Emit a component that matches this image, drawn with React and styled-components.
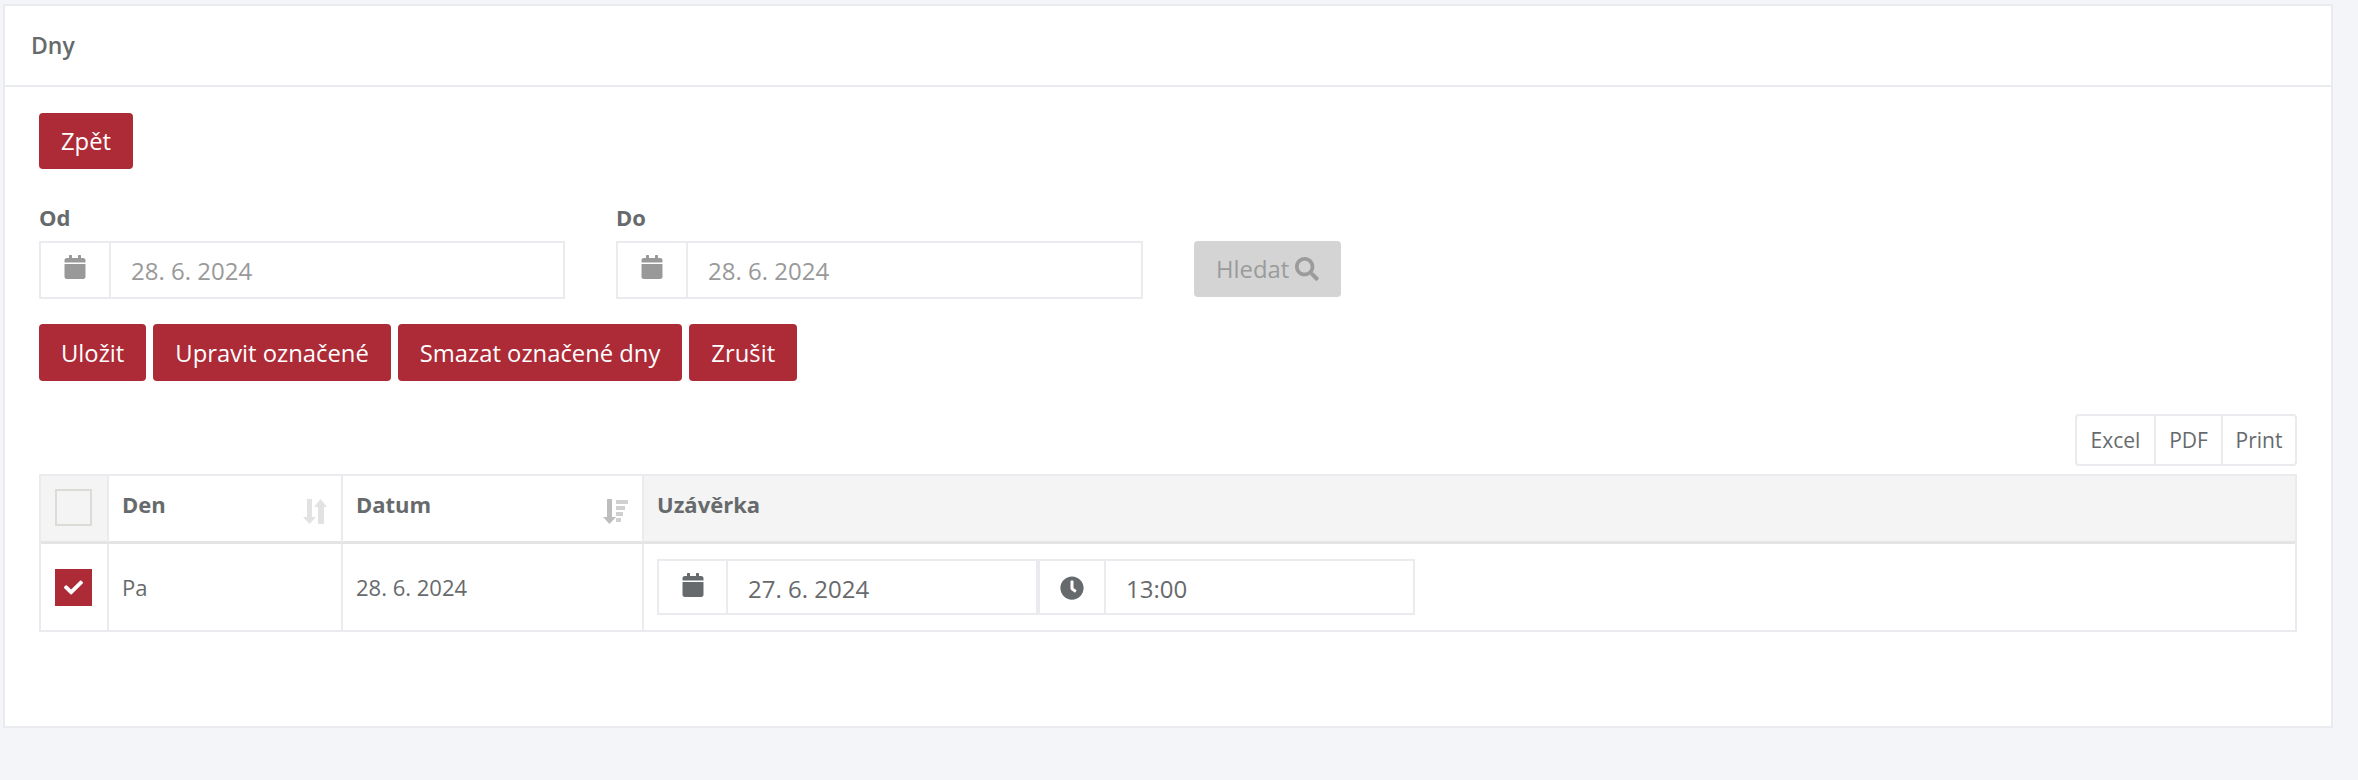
import React from 'react';
import styled, { createGlobalStyle } from 'styled-components';
import { FaCalendar, FaClock, FaSearch, FaCheck } from 'react-icons/fa';

const Global = createGlobalStyle`
  html, body { margin: 0; padding: 0; background: #f3f5f9; }
  body { font-family: "Open Sans", sans-serif; font-size: 22px; color: #676a6c; }
`;

const Page = styled.div`
  padding: 4px 25px 0 3px;
  height: 776px;
`;

const Card = styled.section`
  background: #fff;
  border: 2px solid #e9ebee;
  height: 724px;
  box-sizing: border-box;
`;

const CardHeader = styled.header`
  height: 81px;
  box-sizing: border-box;
  border-bottom: 2px solid #e9ebee;
  padding: 25px 0 0 26px;
  font-size: 23px;
  font-weight: 600;
  line-height: 28px;
`;

const CardBody = styled.div`
  padding: 26px 34px 0 34px;
  display: flex;
  flex-direction: column;
`;

const Button = styled.button`
  height: ${p => p.$h || 57}px;
  padding: 0 22px;
  margin-bottom: ${p => p.$mb || 0}px;
  border: 0;
  border-radius: 4px;
  background: ${p => (p.$disabled ? '#d4d4d4' : '#ad2a37')};
  color: ${p => (p.$disabled ? '#9b9b9b' : '#fff')};
  font: 400 23.800px "Open Sans", sans-serif;
  display: inline-flex;
  align-items: center;
  gap: 6px;
  white-space: nowrap;
`;

const BackRow = styled.div`
  display: flex;
  margin-bottom: 35px;
`;

const FilterRow = styled.div`
  display: flex;
  align-items: flex-end;
`;

const Field = styled.div`
  width: ${p => p.$w}px;
  margin-right: ${p => p.$mr}px;
`;

const Label = styled.label`
  display: block;
  font-weight: 700;
  font-size: 22px;
  line-height: 27px;
  margin-bottom: 10px;
`;

const InputGroup = styled.div`
  display: flex;
  height: ${p => p.$h || 58}px;
  box-sizing: border-box;
  border: 2px solid #e9ebee;
  width: ${p => (p.$w ? `${p.$w}px` : 'auto')};
  color: ${p => p.$color || '#999'};
`;

const Addon = styled.span`
  width: ${p => p.$w || 70}px;
  flex: none;
  box-sizing: border-box;
  border-right: 2px solid #e9ebee;
  display: flex;
  justify-content: center;
  padding-top: ${p => p.$top || 12}px;
  font-size: 24px;
`;

const Value = styled.span`
  padding-left: 20px;
  line-height: 55px;
  font-size: 24px;
`;

const Actions = styled.div`
  display: flex;
  gap: 7px;
  margin-top: 25px;
`;

const ExportRow = styled.div`
  display: flex;
  justify-content: flex-end;
  margin-top: 33px;
  margin-bottom: 8px;
`;

const ExportGroup = styled.div`
  display: flex;
  height: 52px;
  box-sizing: border-box;
  border: 2px solid #e9ebee;
  border-radius: 4px;
`;

const ExportItem = styled.span`
  width: ${p => p.$w}px;
  box-sizing: border-box;
  display: flex;
  align-items: center;
  justify-content: center;
  font-size: 21px;
  & + & { border-left: 2px solid #e9ebee; }
`;

const Table = styled.div`
  display: grid;
  grid-template-columns: 66px 234px 301px 1fr;
  grid-template-rows: 68px 86px;
  border: 2px solid #e9ebee;
  box-sizing: border-box;
  font-size: 22px;
`;

const HeadCell = styled.div`
  position: relative;
  box-sizing: border-box;
  background: ${p => (p.$shade ? '#f4f4f4' : '#fff')};
  border-bottom: 3px solid #e4e4e4;
  border-left: ${p => (p.$first ? 0 : '2px solid #e9ebee')};
  padding: 13px 0 0 ${p => (p.$first ? 14 : 13)}px;
  font-weight: 700;
  line-height: 30px;
`;

const Cell = styled.div`
  box-sizing: border-box;
  border-left: ${p => (p.$first ? 0 : '2px solid #e9ebee')};
  padding-left: ${p => (p.$first ? 14 : 13)}px;
  display: flex;
  align-items: center;
`;

const SortIcon = styled.span`
  position: absolute;
  right: 14px;
  top: 23px;
  display: flex;
`;

const Check = styled.span`
  width: 37px;
  height: 37px;
  box-sizing: border-box;
  display: flex;
  align-items: center;
  justify-content: center;
  background: ${p => (p.$on ? '#ad2a37' : '#f4f4f4')};
  border: ${p => (p.$on ? 0 : '2px solid #dcdcd6')};
  color: #fff;
  font-size: 19px;
`;

const InlineInputs = styled.div`
  display: flex;
`;

// unsorted column: arrow down + arrow up
const SortBoth = () => (
  <svg width="24" height="25" viewBox="0 0 24 25" fill="#e2e2e2">
    <path d="M4 0h5v18h4l-6.500 7L0 18h4z" />
    <path d="M17.500 0L24 8h-3v17h-6V8h-4z" />
  </svg>
);

// sorted column: arrow down + bars getting shorter
const SortDesc = () => (
  <svg width="25" height="25" viewBox="0 0 25 25">
    <path fill="#bdbdbd" d="M4 0h5v18h4l-6.500 7L0 18h4z" />
    <path fill="#d0d0d0" d="M13 1h12v4H13zM13 7h9v4h-9zM13 13h7v4h-7zM13 19h5v4h-5z" />
  </svg>
);

const App = () => (
  <>
    <Global />
    <Page>
      <Card>
        <CardHeader>Dny</CardHeader>
        <CardBody>
          <BackRow><Button $h={56}>Zpět</Button></BackRow>
          <FilterRow>
            <Field $w={526} $mr={51}>
              <Label>Od</Label>
              <InputGroup>
                <Addon><FaCalendar /></Addon>
                <Value>28. 6. 2024</Value>
              </InputGroup>
            </Field>
            <Field $w={527} $mr={51}>
              <Label>Do</Label>
              <InputGroup>
                <Addon><FaCalendar /></Addon>
                <Value>28. 6. 2024</Value>
              </InputGroup>
            </Field>
            <Button $disabled $h={56} $mb={2}>Hledat<FaSearch /></Button>
          </FilterRow>
          <Actions>
            <Button>Uložit</Button>
            <Button>Upravit označené</Button>
            <Button>Smazat označené dny</Button>
            <Button>Zrušit</Button>
          </Actions>
          <ExportRow>
            <ExportGroup>
              <ExportItem $w={77}>Excel</ExportItem>
              <ExportItem $w={67}>PDF</ExportItem>
              <ExportItem $w={74}>Print</ExportItem>
            </ExportGroup>
          </ExportRow>
          <Table>
            <HeadCell $first $shade><Check /></HeadCell>
            <HeadCell>Den<SortIcon><SortBoth /></SortIcon></HeadCell>
            <HeadCell>Datum<SortIcon><SortDesc /></SortIcon></HeadCell>
            <HeadCell $shade>Uzávěrka</HeadCell>
            <Cell $first><Check $on><FaCheck /></Check></Cell>
            <Cell>Pa</Cell>
            <Cell>28. 6. 2024</Cell>
            <Cell>
              <InlineInputs>
                <InputGroup $w={381} $h={56} $color="#676a6c">
                  <Addon $w={69}><FaCalendar /></Addon>
                  <Value>27. 6. 2024</Value>
                </InputGroup>
                <InputGroup $w={377} $h={56} $color="#676a6c">
                  <Addon $w={66} $top={15}><FaClock /></Addon>
                  <Value>13:00</Value>
                </InputGroup>
              </InlineInputs>
            </Cell>
          </Table>
        </CardBody>
      </Card>
    </Page>
  </>
);

export default App;
